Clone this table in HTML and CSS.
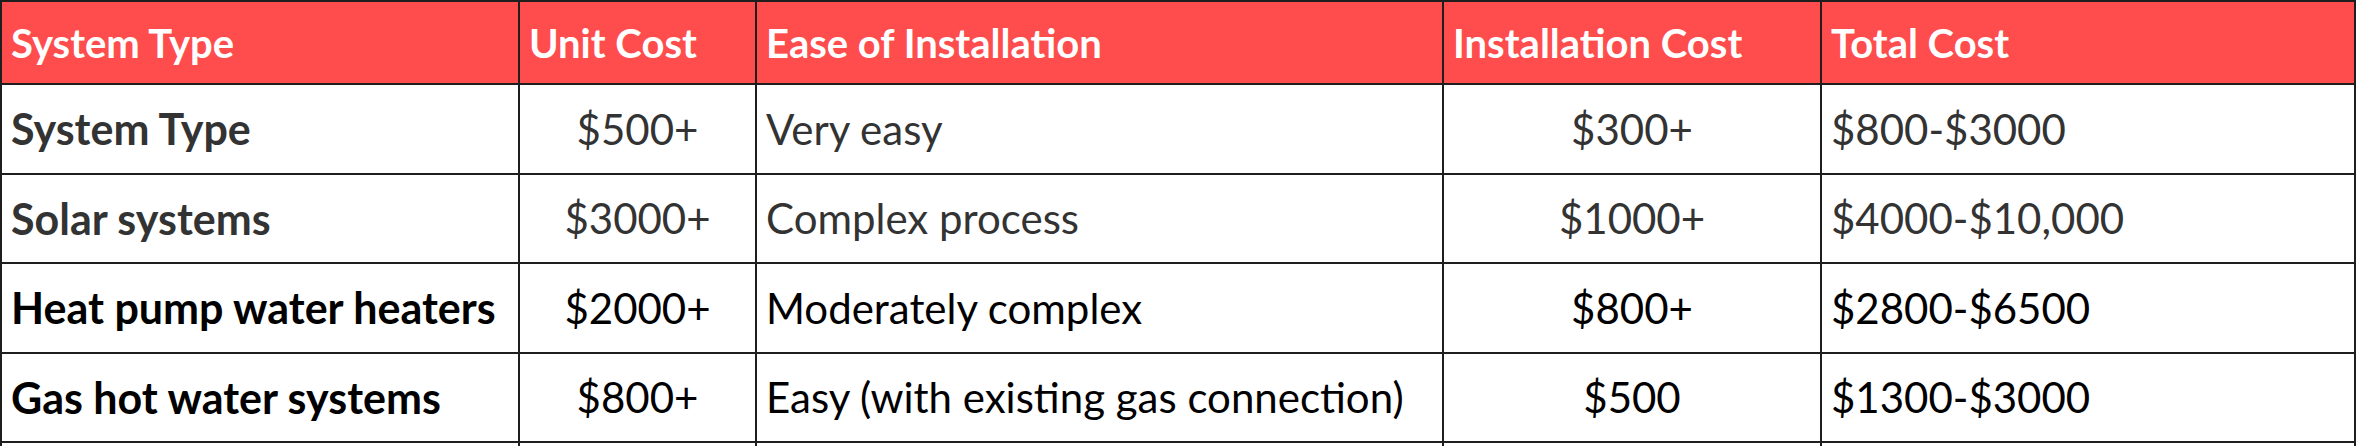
FILE: index.html
```html
<!DOCTYPE html>
<html lang="en">
<head>
<meta charset="utf-8">
<title>Hot water system costs</title>
<link rel="stylesheet" href="styles.css">
</head>
<body>
<table class="cost-table">
  <colgroup>
    <col class="c1"><col class="c2"><col class="c3"><col class="c4"><col class="c5">
  </colgroup>
  <thead>
    <tr>
      <th>System Type</th>
      <th>Unit Cost</th>
      <th>Ease of Installation</th>
      <th>Installation Cost</th>
      <th>Total Cost</th>
    </tr>
  </thead>
  <tbody>
    <tr class="grey">
      <td class="name">System Type</td>
      <td class="num">$500+</td>
      <td>Very easy</td>
      <td class="num">$300+</td>
      <td>$800-$3000</td>
    </tr>
    <tr class="grey">
      <td class="name">Solar systems</td>
      <td class="num">$3000+</td>
      <td>Complex process</td>
      <td class="num">$1000+</td>
      <td>$4000-$10,000</td>
    </tr>
    <tr class="black">
      <td class="name">Heat pump water heaters</td>
      <td class="num">$2000+</td>
      <td>Moderately complex</td>
      <td class="num">$800+</td>
      <td>$2800-$6500</td>
    </tr>
    <tr class="black">
      <td class="name">Gas hot water systems</td>
      <td class="num">$800+</td>
      <td>Easy (with existing gas connection)</td>
      <td class="num">$500</td>
      <td>$1300-$3000</td>
    </tr>
    <tr class="black">
      <td class="name">Electric hot water systems</td>
      <td class="num">$400+</td>
      <td>Easy</td>
      <td class="num">$300+</td>
      <td>$700-$2500</td>
    </tr>
  </tbody>
</table>
</body>
</html>
```

FILE: styles.css
```css
html, body {
  margin: 0;
  padding: 0;
  background: #ffffff;
}

.cost-table {
  border-collapse: collapse;
  width: 2354px;
  table-layout: fixed;
  font-family: Lato, "Noto Sans", sans-serif;
  font-size: 42px;
}

.c1 { width: 518px; }
.c2 { width: 237px; }
.c3 { width: 687px; }
.c4 { width: 378px; }
.c5 { width: 534px; }

.cost-table th,
.cost-table td {
  border: 2px solid #1e1e1e;
  padding: 0 9px;
  text-align: left;
  vertical-align: middle;
  white-space: nowrap;
  overflow: hidden;
}

.cost-table th {
  background: #ff4c4c;
  color: #ffffff;
  font-weight: 700;
  font-size: 40px;
  height: 83px;
  box-sizing: border-box;
}

.cost-table td {
  height: 87.5px;
  font-weight: 400;
}

.cost-table td.num {
  text-align: center;
}

.cost-table td.name {
  font-weight: 700;
  font-size: 43px;
}

.grey td { color: #333333; }
.black td { color: #000000; }
```
